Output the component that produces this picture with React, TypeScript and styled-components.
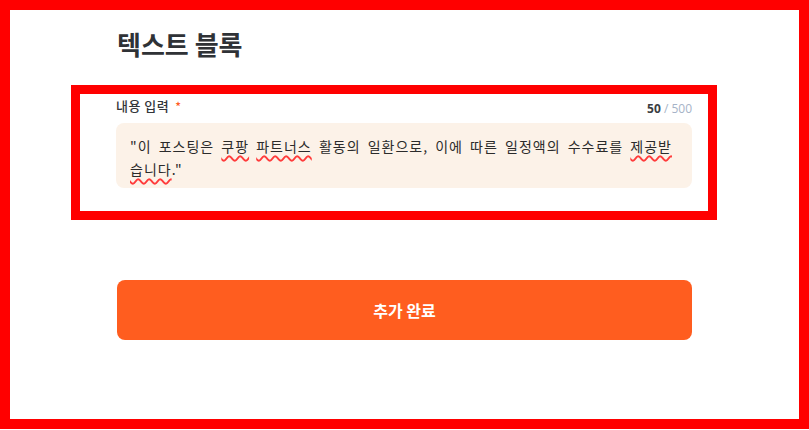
import React, { useState } from 'react';
import styled, { createGlobalStyle } from 'styled-components';

const GlobalStyle = createGlobalStyle`
  html, body {
    margin: 0;
    padding: 0;
    background: #ffffff;
  }
  body {
    font-family: "Noto Sans CJK KR", "Noto Sans", sans-serif;
    color: #2f3236;
  }
`;

const Frame = styled.div`
  box-sizing: border-box;
  width: 809px;
  height: 429px;
  border: 10px solid #ff0000;
  background: #ffffff;
`;

const Column = styled.div`
  width: 575px;
  margin: 0 auto;
  display: flex;
  flex-direction: column;
`;

const Title = styled.h2`
  margin: 18px 0 25px 0;
  font-size: 26px;
  line-height: 32px;
  font-weight: 700;
  color: #2f3236;
`;

const FieldGroup = styled.div`
  margin: 0 -25px 0 -46px;
  padding: 3px 16px 23px 36px;
  border: 9px solid #ff0000;
  display: flex;
  flex-direction: column;
  gap: 8px;
`;

const FieldHead = styled.div`
  display: flex;
  align-items: center;
  justify-content: space-between;
  height: 18px;
`;

const Label = styled.label`
  font-size: 13px;
  line-height: 18px;
  font-weight: 500;
  letter-spacing: 0.5px;
  color: #33363a;
`;

const Required = styled.span`
  color: #ff5d1f;
  margin-left: 6px;
  font-size: 12px;
`;

const Counter = styled.span`
  font-family: "Open Sans", "Noto Sans", sans-serif;
  font-size: 12px;
  color: #a6b3c7;
  padding-top: 4px;

  b {
    color: #3a3d42;
    font-weight: 700;
  }
`;

const TextBox = styled.div`
  box-sizing: border-box;
  height: 65px;
  padding: 12px 14px 6px 14px;
  background: #fcf2e8;
  border-radius: 8px;
  font-size: 14px;
  line-height: 23px;
  letter-spacing: 1px;
  word-spacing: 3px;
  color: #2b2b2b;
  word-break: break-all;
  overflow: hidden;
`;

const Misspelled = styled.span`
  text-decoration: underline wavy #ff3b3b;
  text-decoration-thickness: 1.5px;
  text-underline-offset: 3px;
  text-decoration-skip-ink: none;
`;

const SubmitButton = styled.button`
  margin-top: 60px;
  height: 60px;
  border: none;
  border-radius: 8px;
  background: #ff5d1f;
  color: #ffffff;
  font-family: inherit;
  font-size: 16px;
  font-weight: 700;
  cursor: pointer;

  &:hover {
    filter: brightness(0.95);
  }
`;

const App: React.FC = () => {
  const [count] = useState(50);

  return (
    <>
      <GlobalStyle />
      <Frame>
        <Column>
          <Title>텍스트 블록</Title>
          <FieldGroup>
            <FieldHead>
              <Label>
                내용 입력<Required>*</Required>
              </Label>
              <Counter>
                <b>{count}</b> / 500
              </Counter>
            </FieldHead>
            <TextBox role="textbox" aria-multiline="true">
              "이 포스팅은 <Misspelled>쿠팡</Misspelled> <Misspelled>파트너스</Misspelled> 활동의 일환으로, 이에 따른 일정액의 수수료를{' '}
              <Misspelled>제공받습니다</Misspelled>."
            </TextBox>
          </FieldGroup>
          <SubmitButton>추가 완료</SubmitButton>
        </Column>
      </Frame>
    </>
  );
};

export default App;
